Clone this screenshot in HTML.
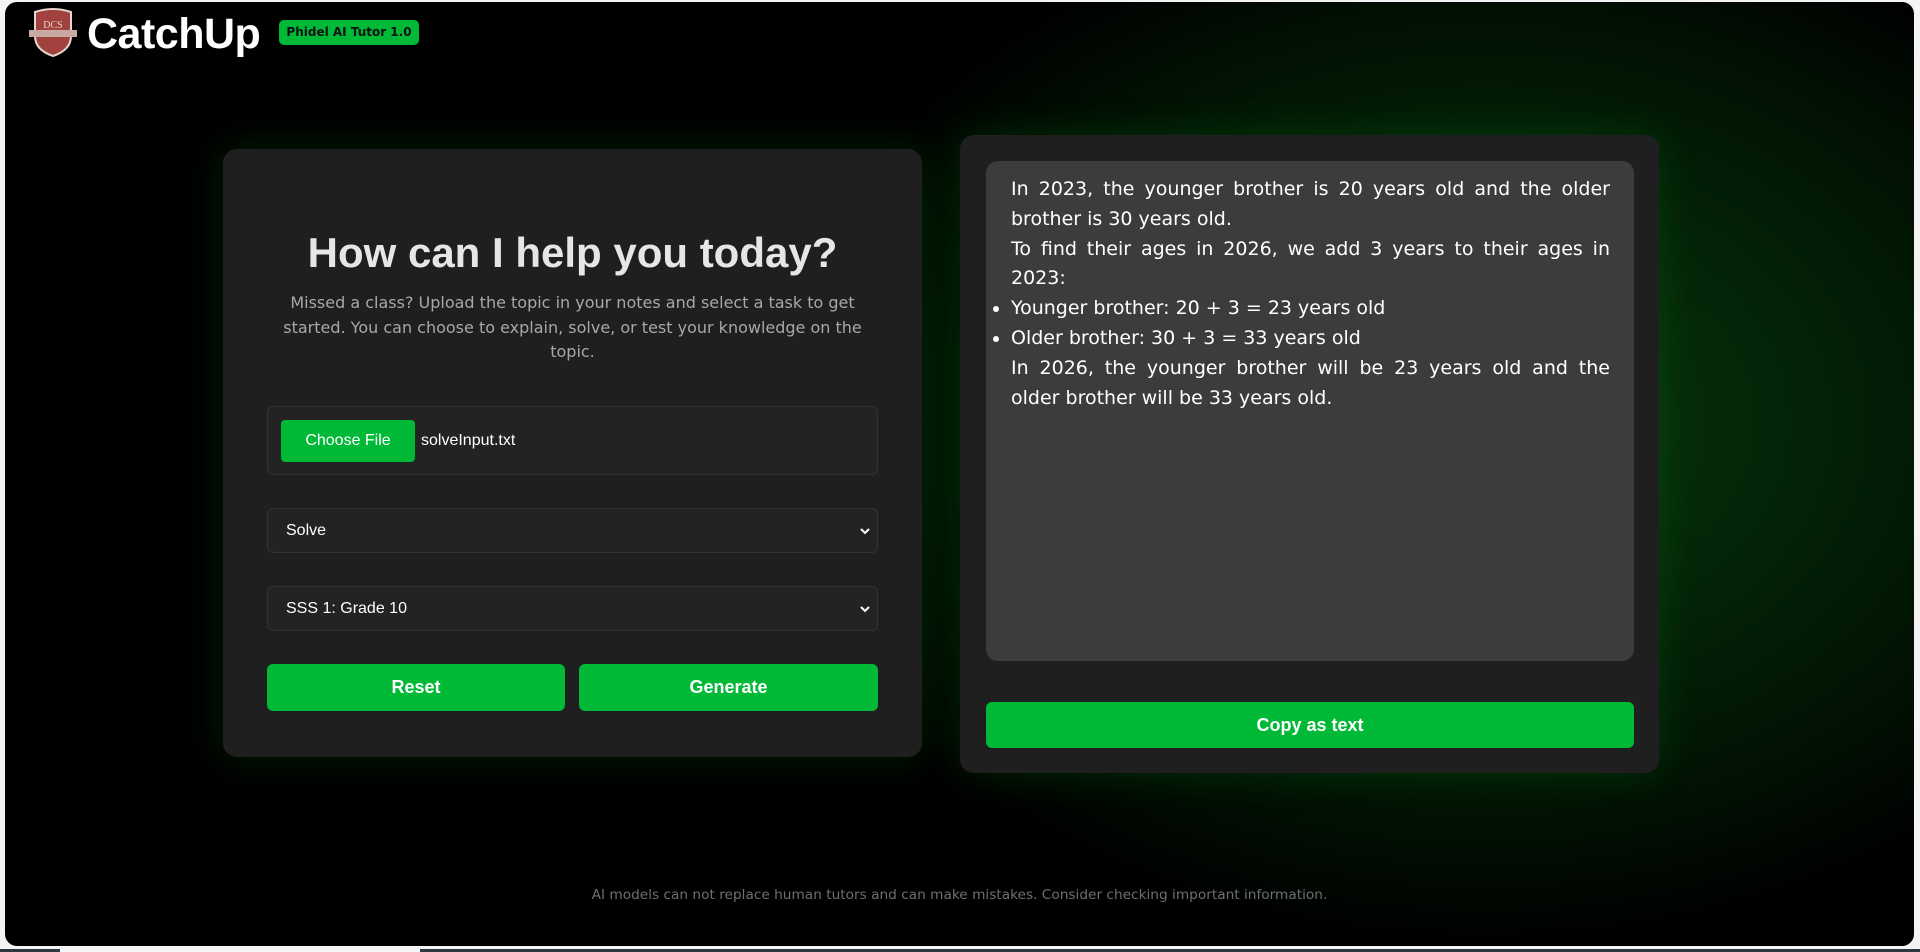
<!DOCTYPE html>
<html><head><meta charset="utf-8"><style>
*{box-sizing:border-box;margin:0;padding:0}
html,body{width:1920px;height:952px;overflow:hidden;background:#f4f4f4;font-family:"Liberation Sans",sans-serif}
.bar{position:absolute;left:0;top:949px;width:1920px;height:3px;background:#2a3a40}
.bar i{position:absolute;left:60px;top:0;width:360px;height:3px;background:#f4f4f4}
.panel{position:absolute;left:5px;top:2px;width:1909px;height:944px;border-radius:12px;overflow:hidden;
background:radial-gradient(ellipse 850px 620px at 1480px 420px,#0a3a0e 0%,#052808 30%,#021604 58%,#000 85%)}
.logo{position:absolute;left:22px;top:4px}
.brand{position:absolute;left:82px;top:8px;font-size:43px;font-weight:bold;color:#fff;letter-spacing:-0.5px}
.badge{position:absolute;left:274px;top:18px;width:140px;height:25px;border-radius:5px;background:#00b936;color:#111;font-weight:bold;text-align:center;line-height:25px;font-family:"DejaVu Sans",sans-serif;font-size:12px}
.card{position:absolute;background:#1f1f1f;border-radius:14px;box-shadow:0 0 40px rgba(0,180,40,.18)}
.l{left:218px;top:147px;width:699px;height:608px}
.r{left:955px;top:133px;width:699px;height:638px}
h1{position:absolute;left:0;width:100%;top:80px;text-align:center;font-size:42px;color:#e6e6e6;font-weight:bold}
.p{position:absolute;left:44px;width:611px;top:142px;text-align:center;color:#a8a8a8;font-size:16px;line-height:24.5px;font-family:"DejaVu Sans",sans-serif}
.box{position:absolute;left:44px;width:611px;border:1px solid #333;background:#232323;border-radius:6px;color:#fff;font-size:16px}
.file{top:257px;height:69px}
.cf{position:absolute;left:13px;top:13px;width:134px;height:42px;background:#00b936;border-radius:4px;line-height:42px;text-align:center;color:#fff}
.fn{position:absolute;left:153px;top:0;line-height:67px}
.sel{height:45px;line-height:43px;padding-left:18px}
.sel svg{position:absolute;right:6px;top:16px}
.btn{position:absolute;background:#00b936;border-radius:6px;color:#fff;font-weight:bold;font-size:18px;text-align:center}
.out{position:absolute;left:26px;top:26px;width:648px;height:500px;background:#3c3c3c;border-radius:12px;color:#fff;line-height:29.8px;padding:14px 24px 0 25px;text-align:justify;font-family:"DejaVu Sans","Liberation Sans",sans-serif;font-size:19px}
.out li{list-style:none;position:relative}
.out li:before{content:"";position:absolute;left:-18px;top:12px;width:6px;height:6px;border-radius:50%;background:#fff}
.foot{position:absolute;left:0;width:100%;top:885px;text-align:center;color:#6f6f6f;font-size:13.7px;font-family:"DejaVu Sans",sans-serif}
</style></head><body>
<div class="panel">
<svg class="logo" width="52" height="52" viewBox="0 0 52 52"><path d="M8 6 Q26 0 44 6 L44 30 Q44 44 26 50 Q8 44 8 30 Z" fill="#a2423f" stroke="#e6d5d0" stroke-width="2"/><rect x="2" y="24" width="48" height="7" fill="#c9a9a2"/><text x="26" y="22" font-size="10" fill="#e8d0c8" text-anchor="middle" font-family="Liberation Serif">DCS</text></svg>
<div class="brand">CatchUp</div>
<div class="badge">Phidel AI Tutor 1.0</div>
<div class="card l">
<h1>How can I help you today?</h1>
<div class="p">Missed a class? Upload the topic in your notes and select a task to get started. You can choose to explain, solve, or test your knowledge on the topic.</div>
<div class="box file"><div class="cf">Choose File</div><div class="fn">solveInput.txt</div></div>
<div class="box sel" style="top:359px">Solve<svg width="12" height="12" viewBox="0 0 12 12"><path d="M2 4 L6 8 L10 4" stroke="#fff" stroke-width="2" fill="none"/></svg></div>
<div class="box sel" style="top:437px">SSS 1: Grade 10<svg width="12" height="12" viewBox="0 0 12 12"><path d="M2 4 L6 8 L10 4" stroke="#fff" stroke-width="2" fill="none"/></svg></div>
<div class="btn" style="left:44px;top:515px;width:298px;height:47px;line-height:47px">Reset</div>
<div class="btn" style="left:356px;top:515px;width:299px;height:47px;line-height:47px">Generate</div>
</div>
<div class="card r">
<div class="out">
<p>In 2023, the younger brother is 20 years old and the older brother is 30 years old.</p>
<p>To find their ages in 2026, we add 3 years to their ages in 2023:</p>
<ul><li>Younger brother: 20 + 3 = 23 years old</li><li>Older brother: 30 + 3 = 33 years old</li></ul>
<p>In 2026, the younger brother will be 23 years old and the older brother will be 33 years old.</p>
</div>
<div class="btn" style="left:26px;top:567px;width:648px;height:46px;line-height:46px">Copy as text</div>
</div>
<div class="foot">AI models can not replace human tutors and can make mistakes. Consider checking important information.</div>
</div>
<div class="bar"><i></i></div>
</body></html>
